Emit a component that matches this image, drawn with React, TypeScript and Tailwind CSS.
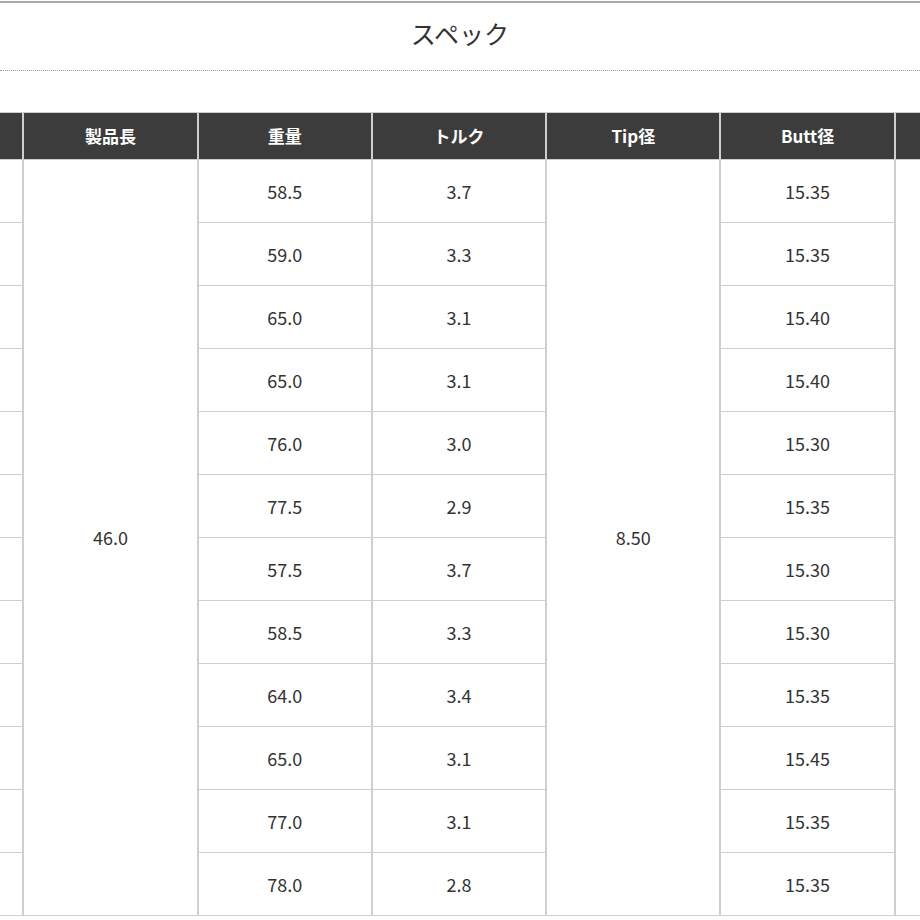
const rows = [
  { weight: '58.5', torque: '3.7', butt: '15.35' },
  { weight: '59.0', torque: '3.3', butt: '15.35' },
  { weight: '65.0', torque: '3.1', butt: '15.40' },
  { weight: '65.0', torque: '3.1', butt: '15.40' },
  { weight: '76.0', torque: '3.0', butt: '15.30' },
  { weight: '77.5', torque: '2.9', butt: '15.35' },
  { weight: '57.5', torque: '3.7', butt: '15.30' },
  { weight: '58.5', torque: '3.3', butt: '15.30' },
  { weight: '64.0', torque: '3.4', butt: '15.35' },
  { weight: '65.0', torque: '3.1', butt: '15.45' },
  { weight: '77.0', torque: '3.1', butt: '15.35' },
  { weight: '78.0', torque: '2.8', butt: '15.35' },
]

// first and last columns are scrolled out of view; only their edges show
const headers = ['', '製品長', '重量', 'トルク', 'Tip径', 'Butt径', '']

const th =
  'h-[47px] bg-[#3c3c3c] text-white font-bold text-[17px] text-center align-middle border-x-2 border-y border-[#cfcfcf]'
const td = 'h-[63px] text-center align-middle border-x-2 border-y border-[#cfcfcf]'

export default function App() {
  return (
    <div
      className="w-[920px] h-[920px] overflow-hidden bg-white text-[#333]"
      style={{ fontFamily: '"Noto Sans CJK JP", "Noto Sans", sans-serif' }}
    >
      <div className="mt-[1px] border-t-2 border-[#a8a8a8]">
        <h2 className="h-[68px] pb-[5px] flex items-center justify-center text-[25px] font-normal border-b border-dotted border-[#999]">
          スペック
        </h2>
      </div>

      <div className="mt-[41px] overflow-hidden">
        <table className="table-fixed border-collapse w-[1222px] ml-[-152px] text-[18px]">
          <thead>
            <tr>
              {headers.map((h, i) => (
                <th key={i} className={th}>
                  {h}
                </th>
              ))}
            </tr>
          </thead>
          <tbody>
            {rows.map((r, i) => (
              <tr key={i}>
                <td className={td}></td>
                {i === 0 && (
                  <td rowSpan={rows.length} className={td}>
                    46.0
                  </td>
                )}
                <td className={td}>{r.weight}</td>
                <td className={td}>{r.torque}</td>
                {i === 0 && (
                  <td rowSpan={rows.length} className={td}>
                    8.50
                  </td>
                )}
                <td className={td}>{r.butt}</td>
                {i === 0 && <td rowSpan={rows.length} className={td}></td>}
              </tr>
            ))}
          </tbody>
        </table>
      </div>
    </div>
  )
}
